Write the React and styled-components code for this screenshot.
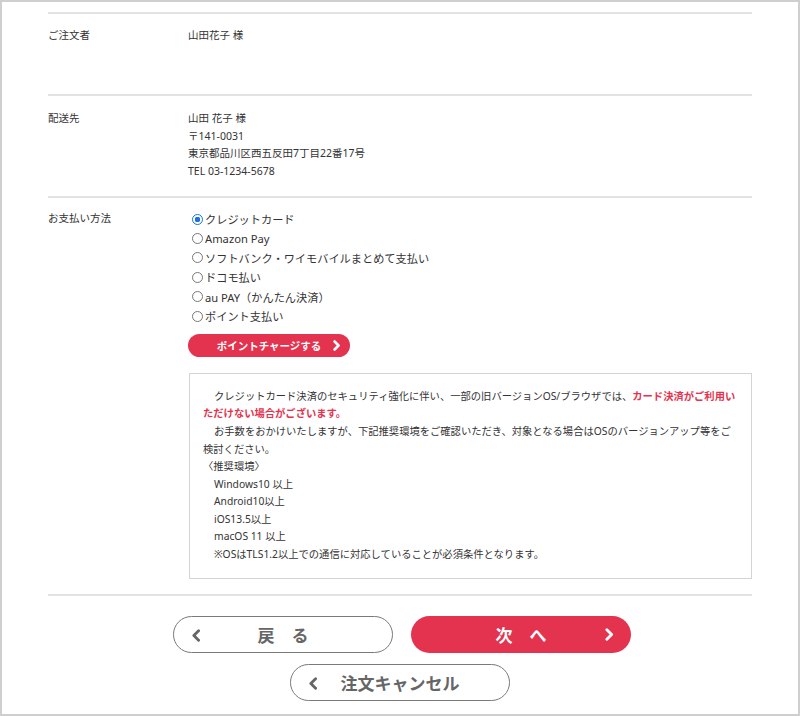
import React, { useState } from 'react'
import styled, { createGlobalStyle } from 'styled-components'

const GlobalStyle = createGlobalStyle`
  html, body {
    margin: 0;
    padding: 0;
    background: #fff;
  }
  body {
    font-family: "Noto Sans", "Noto Sans CJK JP", sans-serif;
    color: #333;
  }
`

const Frame = styled.div`
  box-sizing: border-box;
  width: 800px;
  height: 716px;
  border: 2px solid #cfcfcf;
  padding: 10px 46px 0;
`

const Row = styled.div`
  display: grid;
  grid-template-columns: 140px 1fr;
  border-top: 2px solid #e2e2e2;
  padding: ${({ $pad }) => $pad};
  min-height: ${({ $min }) => $min || 0}px;
  box-sizing: border-box;
`

const Label = styled.div`
  font-size: 10.5px;
  line-height: 17.6px;
`

const Value = styled.div`
  font-size: 10.5px;
  line-height: 17.6px;
`

const RadioList = styled.div`
  display: flex;
  flex-direction: column;
`

const RadioRow = styled.label`
  display: flex;
  align-items: center;
  height: 19.4px;
  font-size: 11.2px;
  padding-left: 4px;
  cursor: pointer;
`

const RadioDot = styled.span`
  box-sizing: border-box;
  width: 11px;
  height: 11px;
  border-radius: 50%;
  margin-right: 2px;
  border: 1px solid ${({ $on }) => ($on ? '#1a73d9' : '#777')};
  background: ${({ $on }) => ($on ? 'radial-gradient(circle, #1a73d9 0 2.6px, #fff 3px)' : '#fff')};
  flex-shrink: 0;
`

const ChargeButton = styled.button`
  display: flex;
  align-items: center;
  justify-content: center;
  position: relative;
  width: 162px;
  height: 23px;
  margin-top: 8px;
  border: none;
  border-radius: 12px;
  background: #e3334f;
  color: #fff;
  font-family: inherit;
  font-size: 10.5px;
  font-weight: bold;
  padding: 0;
  cursor: pointer;
  & svg {
    position: absolute;
    right: 10px;
    top: 6px;
  }
`

const Notice = styled.div`
  box-sizing: border-box;
  margin: 16px 0 0 1px;
  border: 1px solid #d4d4d4;
  padding: 14px 13px 14px 13px;
  font-size: 10.3px;
  line-height: 17.6px;
`

const Line = styled.div`
  white-space: nowrap;
  padding-left: ${({ $indent }) => $indent || 0}px;
`

const Red = styled.span`
  color: #e3334f;
  font-weight: bold;
`

const Footer = styled.div`
  border-top: 2px solid #e2e2e2;
  padding-top: 20px;
  display: flex;
  flex-direction: column;
  align-items: center;
  gap: 11px;
`

const ButtonRow = styled.div`
  display: flex;
  gap: 18px;
  margin-left: 4px;
`

const PillButton = styled.button`
  position: relative;
  box-sizing: border-box;
  width: 220px;
  height: 37px;
  border-radius: 19px;
  border: ${({ $red }) => ($red ? 'none' : '1.5px solid #7a7a7a')};
  background: ${({ $red }) => ($red ? '#e3334f' : '#fff')};
  color: ${({ $red }) => ($red ? '#fff' : '#666')};
  font-family: "Noto Sans CJK JP", sans-serif;
  font-size: 17px;
  font-weight: bold;
  display: flex;
  align-items: center;
  justify-content: center;
  padding: 0;
  cursor: pointer;
  & svg {
    position: absolute;
    top: 12px;
    ${({ $side }) => ($side === 'right' ? 'right: 18px;' : 'left: 18px;')}
  }
`

const Chevron = ({ dir = 'right', color = '#fff', size = 11, stroke = 2.6 }) => (
  <svg width={size * 0.65} height={size} viewBox="0 0 7 11" fill="none">
    <polyline
      points={dir === 'right' ? '1.5,1.5 5.5,5.5 1.5,9.5' : '5.5,1.5 1.5,5.5 5.5,9.5'}
      stroke={color}
      strokeWidth={stroke}
      strokeLinecap="round"
      strokeLinejoin="round"
    />
  </svg>
)

const methods = [
  'クレジットカード',
  'Amazon Pay',
  'ソフトバンク・ワイモバイルまとめて支払い',
  'ドコモ払い',
  'au PAY（かんたん決済）',
  'ポイント支払い',
]

export default function App() {
  const [method, setMethod] = useState(0)

  return (
    <>
      <GlobalStyle />
      <Frame>
        <Row $pad="13px 0 0" $min={82}>
          <Label>ご注文者</Label>
          <Value>山田花子 様</Value>
        </Row>

        <Row $pad="14px 0 16px">
          <Label>配送先</Label>
          <Value>
            山田 花子 様
            <br />
            〒141-0031
            <br />
            東京都品川区西五反田7丁目22番17号
            <br />
            TEL 03-1234-5678
          </Value>
        </Row>

        <Row $pad="11px 0 15px">
          <Label style={{ paddingTop: 1 }}>お支払い方法</Label>
          <div>
            <RadioList>
              {methods.map((m, i) => (
                <RadioRow key={m} onClick={() => setMethod(i)}>
                  <RadioDot $on={method === i} />
                  {m}
                </RadioRow>
              ))}
            </RadioList>
            <ChargeButton>
              ポイントチャージする
              <Chevron size={11} />
            </ChargeButton>
            <Notice>
              <Line $indent={11}>
                クレジットカード決済のセキュリティ強化に伴い、一部の旧バージョンOS/ブラウザでは、<Red>カード決済がご利用い</Red>
              </Line>
              <Line>
                <Red>ただけない場合がございます。</Red>
              </Line>
              <Line $indent={11}>
                お手数をおかけいたしますが、下記推奨環境をご確認いただき、対象となる場合はOSのバージョンアップ等をご
              </Line>
              <Line>検討ください。</Line>
              <Line>〈推奨環境〉</Line>
              <Line $indent={11}>Windows10 以上</Line>
              <Line $indent={11}>Android10以上</Line>
              <Line $indent={11}>iOS13.5以上</Line>
              <Line $indent={11}>macOS 11 以上</Line>
              <Line $indent={11}>※OSはTLS1.2以上での通信に対応していることが必須条件となります。</Line>
            </Notice>
          </div>
        </Row>

        <Footer>
          <ButtonRow>
            <PillButton $side="left">
              <Chevron dir="left" color="#666" size={13} stroke={2.4} />
              戻　る
            </PillButton>
            <PillButton $red $side="right">
              次　へ
              <Chevron color="#fff" size={13} stroke={2.4} />
            </PillButton>
          </ButtonRow>
          <PillButton $side="left">
            <Chevron dir="left" color="#666" size={13} stroke={2.4} />
            注文キャンセル
          </PillButton>
        </Footer>
      </Frame>
    </>
  )
}
